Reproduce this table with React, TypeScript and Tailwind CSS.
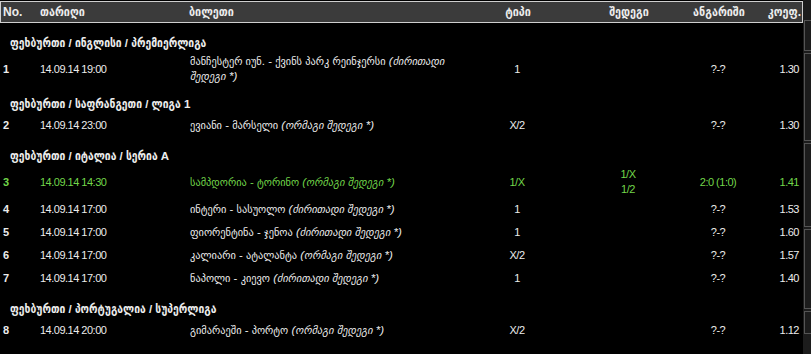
type Row = {
  no: number;
  date: string;
  match: string;
  bet: string;
  type: string;
  result?: string[];
  score: string;
  odds: string;
  won?: boolean;
  twoLines?: boolean;
};

type Group = { title: string; rows: Row[] };

const MAIN = "ძირითადი შედეგი *";
const DOUBLE = "ორმაგი შედეგი *";

const groups: Group[] = [
  {
    title: "ფეხბურთი / ინგლისი / პრემიერლიგა",
    rows: [
      { no: 1, date: "14.09.14 19:00", match: "მანჩესტერ იუნ. - ქვინს პარკ რეინჯერსი", bet: MAIN, type: "1", score: "?-?", odds: "1.30", twoLines: true },
    ],
  },
  {
    title: "ფეხბურთი / საფრანგეთი / ლიგა 1",
    rows: [
      { no: 2, date: "14.09.14 23:00", match: "ევიანი - მარსელი", bet: DOUBLE, type: "X/2", score: "?-?", odds: "1.30" },
    ],
  },
  {
    title: "ფეხბურთი / იტალია / სერია A",
    rows: [
      { no: 3, date: "14.09.14 14:30", match: "სამპდორია - ტორინო", bet: DOUBLE, type: "1/X", result: ["1/X", "1/2"], score: "2:0 (1:0)", odds: "1.41", won: true, twoLines: true },
      { no: 4, date: "14.09.14 17:00", match: "ინტერი - სასუოლო", bet: MAIN, type: "1", score: "?-?", odds: "1.53" },
      { no: 5, date: "14.09.14 17:00", match: "ფიორენტინა - ჯენოა", bet: MAIN, type: "1", score: "?-?", odds: "1.60" },
      { no: 6, date: "14.09.14 17:00", match: "კალიარი - ატალანტა", bet: DOUBLE, type: "X/2", score: "?-?", odds: "1.57" },
      { no: 7, date: "14.09.14 17:00", match: "ნაპოლი - კიევო", bet: MAIN, type: "1", score: "?-?", odds: "1.40" },
    ],
  },
  {
    title: "ფეხბურთი / პორტუგალია / სუპერლიგა",
    rows: [
      { no: 8, date: "14.09.14 20:00", match: "გიმარაეში - პორტო", bet: DOUBLE, type: "X/2", score: "?-?", odds: "1.12" },
    ],
  },
];

const cols = "grid grid-cols-[38px_150px_280px_98px_124px_56px_57px]";

function BetRow({ r }: { r: Row }) {
  const color = r.won ? "text-[#72d64a]" : "text-[#ececec]";
  const pad = r.twoLines ? "py-[1px]" : "py-[4px]";
  return (
    <div className={`${cols} ${pad} items-center leading-[15px] ${color}`}>
      <div className="pl-[3px] font-bold">{r.no}</div>
      <div className="pl-[2px] tracking-[-0.5px]">{r.date}</div>
      <div className="pl-[2px] pr-[10px] text-[11.5px]">
        {r.match} <span className="italic">({r.bet})</span>
      </div>
      <div className="text-center tracking-[-0.5px]">{r.type}</div>
      <div className="flex flex-col items-center tracking-[-0.5px]">
        {r.result?.map((x) => (
          <span key={x}>{x}</span>
        ))}
      </div>
      <div className="text-center tracking-[-0.5px]">{r.score}</div>
      <div className="pr-[4px] text-right tracking-[-0.5px]">{r.odds}</div>
    </div>
  );
}

export default function App() {
  return (
    <div className="flex h-[354px] w-[811px] overflow-hidden bg-black font-['Liberation_Sans','DejaVu_Sans_Condensed','DejaVu_Sans',sans-serif] text-[11px] text-[#ececec]">
      <div className="w-[803px] shrink-0">
        <div className={`${cols} mt-[1px] h-[22px] items-center border border-[#cfcfcf] bg-[#3b3b3b] text-[12px] font-bold`}>
          <div className="pl-[2px]">No.</div>
          <div className="pl-[1px]">თარიღი</div>
          <div>ბილეთი</div>
          <div className="text-center">ტიპი</div>
          <div className="text-center">შედეგი</div>
          <div className="text-center">ანგარიში</div>
          <div className="pr-[3px] text-right">კოეფ.</div>
        </div>

        <div className="flex flex-col">
          {groups.map((g, i) => (
            <div key={g.title} className={i === 0 ? "mt-[12px]" : "mt-[11px]"}>
              <div className="flex h-[18px] items-center pl-[10px] text-[11.5px] font-bold">{g.title}</div>
              {g.rows.map((r) => (
                <BetRow key={r.no} r={r} />
              ))}
            </div>
          ))}
        </div>
      </div>

      {/* side panel edge */}
      <div className="flex flex-1 flex-col gap-[2px] bg-[#1c1c1c] py-[20px] pl-[1px]">
        <div className="h-[31px] border border-r-0 border-[#555]" />
        <div className="h-[88px] border border-r-0 border-[#555]" />
        <div className="h-[84px] border border-r-0 border-[#555]" />
        <div className="h-[80px] border border-r-0 border-[#555]" />
        <div className="flex-1 border border-r-0 border-[#555]" />
      </div>
    </div>
  );
}
